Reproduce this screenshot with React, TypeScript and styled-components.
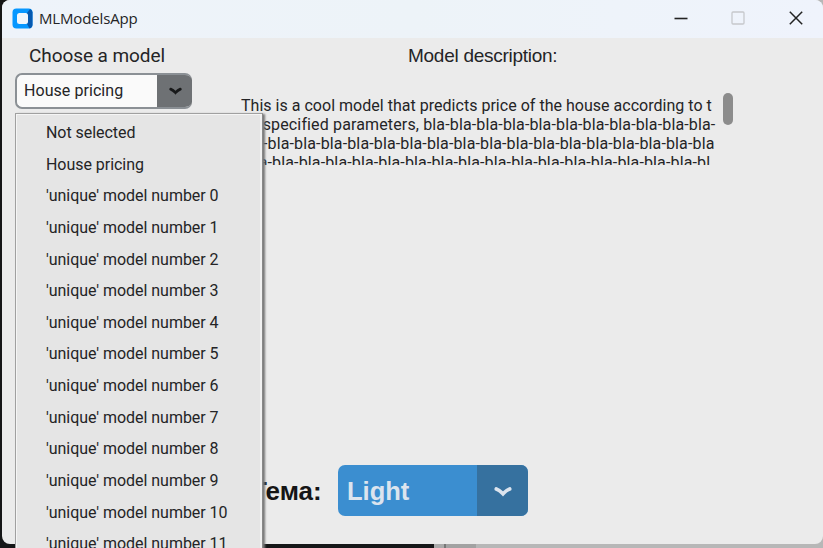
import React from "react";
import styled, { createGlobalStyle } from "styled-components";

const GlobalStyle = createGlobalStyle`
  * { box-sizing: border-box; }
  html, body { margin: 0; overflow: hidden; }
  body { font-family: Roboto, "Liberation Sans", sans-serif; color: #242426; }
`;

const Desktop = styled.div`
  position: relative;
  width: 823px;
  height: 548px;
  padding-left: 2px;
  overflow: hidden;
  background: linear-gradient(90deg, #151617 0 434px, #aaa 434px 444px, #777 444px 446px, #a2a2a2 446px 476px, #b7b7b7 476px);
`;

const Window = styled.main`
  display: flex;
  flex-direction: column;
  width: 821px;
  height: 544px;
  border-radius: 8px;
  overflow: hidden;
  background: #ebebeb;
`;

const TitleBar = styled.header`
  display: flex;
  align-items: center;
  height: 38px;
  padding: 0 0 2px 10px;
  flex: none;
  background: linear-gradient(90deg, #eef3fa, #edf3f8 50%, #eff3fc);
`;

const AppName = styled.h1`
  flex: 1;
  margin: 0 0 0 6px;
  font: 400 15px/20px "Open Sans", sans-serif;
  letter-spacing: -0.15px;
`;

const Controls = styled.div`
  display: flex;
  width: 171px;
  height: 36px;
`;

const Control = styled.button`
  display: flex;
  justify-content: center;
  align-items: center;
  width: 57.5px;
  padding: 0;
  border: 0;
  background: none;
  flex: none;
`;

const Content = styled.div`
  display: grid;
  grid-template-columns: 223px 1fr;
  grid-template-rows: 427px 1fr;
  flex: 1;
`;

const Chooser = styled.section`
  padding: 4px 0 0 13px;
`;

const Heading = styled.h2<{ $inset: number; $spacing: number; $font: string }>`
  margin: 0 0 0 ${(p) => p.$inset}px;
  font: 400 19px/28px ${(p) => p.$font}, sans-serif;
  letter-spacing: ${(p) => p.$spacing}px;
  white-space: nowrap;
`;

const Combo = styled.div`
  display: flex;
  width: 177px;
  height: 36px;
  margin-top: 3px;
  border: 2px solid #8b9095;
  border-right: 0;
  border-radius: 7px;
  overflow: hidden;
  background: #fafafa;
`;

const ComboValue = styled.span`
  flex: 1;
  padding-left: 7px;
  font-size: 16px;
  line-height: 32px;
  letter-spacing: 0.06px;
`;

const ComboArrow = styled.span`
  display: flex;
  align-items: center;
  justify-content: center;
  width: 35px;
  margin: -2px 0;
  padding-left: 1px;
  background: #6e7174;
`;

const Description = styled.section`
  padding-top: 4px;
`;

const TextArea = styled.div`
  display: flex;
  margin: 22px 0 0 16px;
`;

const TextLines = styled.div`
  width: 482px;
  height: 73px;
  padding-top: 4px;
  overflow: hidden;
`;

const Line = styled.div<{ $spacing: number }>`
  height: 19px;
  font-size: 16px;
  line-height: 19px;
  white-space: pre;
  letter-spacing: ${(p) => p.$spacing}px;
`;

const Thumb = styled.div`
  width: 10px;
  height: 32px;
  margin-top: 1px;
  border-radius: 5px;
  background: #8c8c8c;
`;

const ThemeRow = styled.section`
  display: flex;
  grid-column: 2;
  padding-left: 26px;
`;

const ThemeLabel = styled.span`
  width: 87px;
  color: #151515;
  font: 700 26px/52px "Liberation Sans", sans-serif;
`;

const ThemeSelect = styled.div`
  display: flex;
  width: 190px;
  height: 51px;
  border-radius: 7px;
  overflow: hidden;
  background: #3b8ed0;
  color: #dce4ee;
  font: 700 25.5px/52px "Liberation Sans", sans-serif;
`;

const ThemeValue = styled.span`
  flex: 1;
  padding-left: 9px;
`;

const ThemeArrow = styled.span`
  display: flex;
  align-items: center;
  justify-content: center;
  width: 51px;
  padding-top: 2px;
  background: #36719f;
`;

const Menu = styled.ul`
  position: absolute;
  left: 15px;
  top: 113px;
  width: 248px;
  height: 450px;
  margin: 0;
  padding: 3px 0 0 30px;
  list-style: none;
  background: #e5e5e5;
  border: 1px solid #a0a0a0;
  border-right-color: #888;
  box-shadow: inset 1px 1px #f5f5f5, inset -2px 0 #f1f1f1, 2px 1px 2px #777;
`;

const MenuItem = styled.li`
  height: 31.65px;
  font-size: 16px;
  line-height: 32px;
  letter-spacing: -0.04px;
  white-space: nowrap;
`;

const Chevron = ({ size, color }: { size: number; color: string }) => (
  <svg width={size} height={size * 0.6} viewBox="0 0 18 11" fill="none" stroke={color} strokeWidth="3.8" strokeLinecap="round">
    <path d="M2.2 3Q5.5 4.2 9 8 12.5 4.2 15.8 3" />
  </svg>
);

const Logo = () => (
  <svg width="21" height="21" viewBox="0 0 21 21">
    <rect x="0.5" y="0.5" width="20" height="20" rx="4" fill="#0797ff" />
    <path d="M15 5 18 1q2.5 1 2.5 3.5v12q0 3-3 4L15 16Z" fill="#0659b0" />
    <rect x="5" y="5" width="11" height="11" rx="2.5" fill="#f1f6fc" />
  </svg>
);

const models = ["Not selected", "House pricing", ...Array.from({ length: 12 }, (_, i) => `'unique' model number ${i}`)];

const lines = [
  { text: "This is a cool model that predicts price of the house according to t", spacing: 0.02 },
  { text: "he specified parameters, " + "bla-".repeat(11), spacing: 0.14 },
  { text: "bla-".repeat(17) + "bla", spacing: 0.14 },
  { text: "-bla".repeat(17) + "-bl", spacing: 0.14 },
];

export default function App() {
  return (
    <Desktop>
      <GlobalStyle />
      <Window>
        <TitleBar>
          <Logo />
          <AppName>MLModelsApp</AppName>
          <Controls>
            <Control aria-label="Minimize">
              <svg width="14" height="14"><path d="M.5 7.5h13" stroke="#222" strokeWidth="1.6" /></svg>
            </Control>
            <Control aria-label="Maximize">
              <svg width="14" height="14"><rect x="1" y="1" width="12" height="12" rx="1" fill="none" stroke="#c6c8cc" strokeWidth="1.3" /></svg>
            </Control>
            <Control aria-label="Close">
              <svg width="14" height="14"><path d="m.8.8 12.4 12.4m0-12.4L.8 13.2" stroke="#222" strokeWidth="1.5" /></svg>
            </Control>
          </Controls>
        </TitleBar>
        <Content>
          <Chooser>
            <Heading $inset={14} $spacing={-0.08} $font="Roboto">Choose a model</Heading>
            <Combo>
              <ComboValue>House pricing</ComboValue>
              <ComboArrow><Chevron size={13} color="#18191a" /></ComboArrow>
            </Combo>
          </Chooser>
          <Description>
            <Heading $inset={183} $spacing={-0.27} $font={'"Liberation Sans"'}>Model description:</Heading>
            <TextArea>
              <TextLines>
                {lines.map((l) => <Line key={l.text} $spacing={l.spacing}>{l.text}</Line>)}
              </TextLines>
              <Thumb />
            </TextArea>
          </Description>
          <ThemeRow>
            <ThemeLabel>Тема:</ThemeLabel>
            <ThemeSelect>
              <ThemeValue>Light</ThemeValue>
              <ThemeArrow><Chevron size={18} color="#dce4ee" /></ThemeArrow>
            </ThemeSelect>
          </ThemeRow>
        </Content>
      </Window>
      <Menu>
        {models.map((m) => <MenuItem key={m}>{m}</MenuItem>)}
      </Menu>
    </Desktop>
  );
}
